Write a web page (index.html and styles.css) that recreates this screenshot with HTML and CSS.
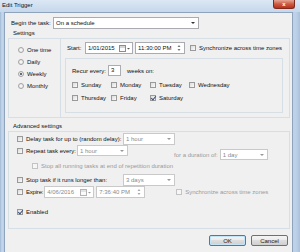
FILE: index.html
```html
<!DOCTYPE html>
<html lang="en">
<head>
    <meta charset="UTF-8">
    <title>Edit Trigger</title>
    <link rel="stylesheet" href="styles.css">
</head>
<body>
    <div class="window">
        <div class="titlebar">
            <span class="title">Edit Trigger</span>
            <span class="close">x</span>
        </div>
        <div class="client">
            <div class="begin-row">
                <span class="begin-label">Begin the task:</span>
                <div class="combo task-combo"><span>On a schedule</span><i class="arrow"></i></div>
            </div>

            <div class="section-label">Settings</div>
            <div class="group settings">
                <div class="freq">
                    <div class="radio-row"><span class="radio"></span>One time</div>
                    <div class="radio-row"><span class="radio"></span>Daily</div>
                    <div class="radio-row"><span class="radio on"></span>Weekly</div>
                    <div class="radio-row"><span class="radio"></span>Monthly</div>
                </div>
                <div class="schedule">
                    <div class="start-row">
                        <span class="start-label">Start:</span>
                        <div class="field date-box">
                            <span>1/01/2015</span>
                            <svg class="cal" width="11" height="7" viewBox="0 0 11 7">
                                <rect x="0.5" y="0.5" width="6" height="6" fill="#fbfbfb" stroke="#8c8c8c"/>
                                <line x1="1" y1="2" x2="6" y2="2" stroke="#b0b0b0"/>
                                <path d="M8 3h3l-1.5 1.5z" fill="#555"/>
                            </svg>
                        </div>
                        <div class="field time-box">
                            <span>11:30:00 PM</span>
                            <svg class="spin" width="6" height="10" viewBox="0 0 6 10">
                                <path d="M1.5 4h3l-1.5-2z M1.5 6h3l-1.5 2z" fill="#777"/>
                            </svg>
                        </div>
                        <span class="cb sync-cb"></span>
                        <span class="sync-text">Synchronize across time zones</span>
                    </div>
                    <div class="recur-box">
                        <div class="recur-row">
                            <span class="recur-label">Recur every:</span>
                            <span class="recur-input">3</span>
                            <span class="weeks">weeks on:</span>
                        </div>
                        <div class="days">
                            <span class="check"><span class="cb"></span>Sunday</span>
                            <span class="check"><span class="cb"></span>Monday</span>
                            <span class="check"><span class="cb"></span>Tuesday</span>
                            <span class="check"><span class="cb"></span>Wednesday</span>
                            <span class="check"><span class="cb"></span>Thursday</span>
                            <span class="check"><span class="cb"></span>Friday</span>
                            <span class="check"><span class="cb checked"></span>Saturday</span>
                        </div>
                    </div>
                </div>
            </div>

            <div class="section-label advanced-label">Advanced settings</div>
            <div class="group advanced">
                <div class="adv-row">
                    <span class="check delay-label"><span class="cb"></span>Delay task for up to (random delay):</span>
                    <div class="combo off delay-combo"><span>1 hour</span><i class="arrow"></i></div>
                </div>
                <div class="adv-row repeat-row">
                    <span class="check repeat-label"><span class="cb"></span>Repeat task every:</span>
                    <div class="combo off repeat-combo"><span>1 hour</span><i class="arrow"></i></div>
                    <div class="duration">
                        <span class="muted">for a duration of:</span>
                        <div class="combo off duration-combo"><span>1 day</span><i class="arrow"></i></div>
                    </div>
                </div>
                <div class="adv-row stopall-row">
                    <span class="check muted"><span class="cb"></span>Stop all running tasks at end of repetition duration</span>
                </div>
                <div class="adv-row stop-row">
                    <span class="check delay-label"><span class="cb"></span>Stop task if it runs longer than:</span>
                    <div class="combo off delay-combo"><span>3 days</span><i class="arrow"></i></div>
                </div>
                <div class="adv-row expire-row">
                    <span class="check expire-label"><span class="cb"></span>Expire:</span>
                    <div class="field off expire-date">
                        <span>4/06/2016</span>
                        <svg class="cal" width="11" height="7" viewBox="0 0 11 7">
                            <rect x="0.5" y="0.5" width="6" height="6" fill="#fbfbfb" stroke="#b4b4b4"/>
                            <line x1="1" y1="2" x2="6" y2="2" stroke="#cccccc"/>
                            <path d="M8 3h3l-1.5 1.5z" fill="#999"/>
                        </svg>
                    </div>
                    <div class="field off expire-time">
                        <span>7:36:40 PM</span>
                        <svg class="spin" width="6" height="10" viewBox="0 0 6 10">
                            <path d="M1.5 4h3l-1.5-2z M1.5 6h3l-1.5 2z" fill="#aaa"/>
                        </svg>
                    </div>
                    <span class="check muted expire-sync"><span class="cb"></span>Synchronize across time zones</span>
                </div>
                <div class="adv-row enabled-row">
                    <span class="check"><span class="cb checked"></span>Enabled</span>
                </div>
            </div>

            <div class="buttons">
                <button class="btn default">OK</button>
                <button class="btn">Cancel</button>
            </div>
        </div>
    </div>
</body>
</html>
```

FILE: styles.css
```css
* {
    margin: 0;
    padding: 0;
    box-sizing: border-box;
}

body {
    width: 300px;
    height: 252px;
    overflow: hidden;
    font-family: "Liberation Sans", Arial, sans-serif;
    font-size: 6px;
    color: #111;
    background: #bcd1e8;
}

.window {
    height: 252px;
    display: flex;
    flex-direction: column;
    background: linear-gradient(90deg, #9fb9d4 0, #c6d8ec 2px, #b9cee6 4px, #bdd1e8 296px, #a9c1da 300px);
}

.titlebar {
    height: 12px;
    display: flex;
    justify-content: space-between;
    align-items: flex-start;
    padding-left: 2px;
    background: linear-gradient(#dbe7f4, #c6d8ec);
}

.title {
    line-height: 10px;
    color: #111;
}

.close {
    width: 22px;
    height: 9px;
    margin-right: 5px;
    background: linear-gradient(#e4a596, #cf5a42 50%, #b7321c);
    border: 1px solid #7e2b1f;
    border-top: none;
    border-radius: 0 0 3px 3px;
    color: #fff;
    font-weight: bold;
    text-align: center;
    line-height: 8px;
}

.client {
    flex: 1;
    margin: 0 7px 0 4px;
    background: #f0f0f0;
    border: 1px solid #8ea4bc;
    border-bottom: none;
}

/* top row */
.begin-row {
    display: flex;
    align-items: center;
    height: 12px;
    margin: 4px 0 0 6px;
}

.begin-label {
    width: 42px;
}

.combo,
.field {
    display: flex;
    align-items: center;
    height: 12px;
    padding: 0 2px;
    background: #fff;
    border: 1px solid #a9abb0;
    white-space: nowrap;
}

.combo .arrow {
    margin-left: auto;
    margin-right: 1px;
    border-left: 2px solid transparent;
    border-right: 2px solid transparent;
    border-top: 2px solid #333;
}

.combo.off,
.field.off {
    color: #8a8a8a;
    border-color: #c9c9c9;
}

.combo.off .arrow {
    border-top-color: #999;
}

.task-combo {
    width: 146px;
}

.section-label {
    height: 9px;
    line-height: 8px;
    padding-left: 8px;
}

.advanced-label {
    height: 13px;
    padding-top: 4px;
}

.group {
    margin: 0 2px 0 3px;
    border: 1px solid #d5dfe5;
}

/* settings */
.settings {
    height: 80px;
    display: flex;
}

.freq {
    width: 52px;
    border-right: 1px solid #d5dfe5;
    padding: 5px 0 0 9px;
}

.radio-row {
    display: flex;
    align-items: center;
    gap: 3px;
    height: 12px;
}

.radio {
    position: relative;
    width: 6px;
    height: 6px;
    border-radius: 50%;
    border: 1px solid #a3a3a3;
    background: radial-gradient(#fdfdfd, #dedede);
}

.radio.on::after {
    content: "";
    position: absolute;
    left: 1px;
    top: 1px;
    width: 2px;
    height: 2px;
    border-radius: 50%;
    background: #333c4e;
}

.schedule {
    flex: 1;
    padding: 3px 6px 0 4px;
}

.start-row {
    display: flex;
    align-items: center;
    height: 12px;
    padding-left: 2px;
}

.start-label {
    width: 18px;
}

.date-box {
    width: 48px;
}

.field .cal {
    margin-left: auto;
}

.time-box {
    width: 50px;
    margin-left: 2px;
}

.field .spin {
    margin-left: auto;
}

.sync-cb {
    margin-left: 5px;
}

.sync-text {
    margin-left: 3px;
}

.cb {
    position: relative;
    flex: none;
    width: 6px;
    height: 6px;
    border: 1px solid #9a9a9a;
    background: linear-gradient(135deg, #dcdcdc, #fbfbfb);
}

.cb.checked::after {
    content: "";
    position: absolute;
    left: 1px;
    top: -1px;
    width: 2px;
    height: 4px;
    border-right: 1px solid #3b4f7e;
    border-bottom: 1px solid #3b4f7e;
    transform: rotate(40deg);
}

.check {
    display: flex;
    align-items: center;
    gap: 3px;
    white-space: nowrap;
}

.recur-box {
    margin-top: 4px;
    height: 55px;
    border: 1px solid #d5dfe5;
    padding: 6px 0 0 6px;
}

.recur-row {
    display: flex;
    align-items: center;
    height: 11px;
}

.recur-label {
    width: 36px;
}

.recur-input {
    width: 13px;
    height: 11px;
    line-height: 9px;
    padding-left: 2px;
    background: #fff;
    border: 1px solid #abadb3;
}

.weeks {
    margin-left: 6px;
}

.days {
    display: grid;
    grid-template-columns: repeat(4, 39px);
    grid-auto-rows: 13px;
    margin-top: 2px;
}

/* advanced */
.advanced {
    height: 98px;
    padding: 1px 0 0 8px;
}

.adv-row {
    display: flex;
    align-items: center;
    height: 12px;
}

.muted {
    color: #9a9a9a;
}

.muted .cb {
    border-color: #c3c3c3;
    background: #f6f6f6;
}

.delay-label {
    width: 106px;
}

.delay-combo {
    width: 52px;
}

.repeat-row {
    height: 15px;
    align-items: flex-start;
}

.repeat-label {
    width: 60px;
    height: 11px;
}

.repeat-combo {
    width: 51px;
    height: 11px;
}

.duration {
    display: flex;
    align-items: center;
    gap: 2px;
    margin: 4px 0 0 46px;
}

.duration-combo {
    width: 48px;
    height: 11px;
}

.stopall-row {
    padding-left: 15px;
}

.stop-row {
    margin-top: 2px;
}

.expire-label {
    flex: none;
    letter-spacing: -0.2px;
}

.expire-date {
    width: 50px;
    margin-left: 1px;
}

.expire-time {
    width: 49px;
    margin-left: 2px;
}

.expire-sync {
    margin-left: 31px;
}

.enabled-row {
    margin-top: 8px;
}

.buttons {
    display: flex;
    justify-content: flex-end;
    gap: 5px;
    margin-top: 6px;
    padding-right: 4px;
}

.btn {
    width: 37px;
    height: 11px;
    font-family: inherit;
    font-size: 6px;
    color: #1c1c1c;
    border: 1px solid #707070;
    border-radius: 2px;
    background: linear-gradient(#f4f4f4, #ebebeb 45%, #dddddd 50%, #cfcfcf);
}

.btn.default {
    border-color: #3c7fb1;
    box-shadow: inset 0 0 0 1px #c2e4f6;
}
```
